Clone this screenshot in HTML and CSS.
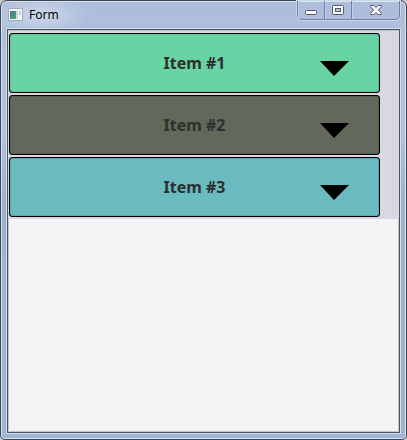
FILE: index.html
```html
<!DOCTYPE html>
<html lang="en">
<head>
  <meta charset="UTF-8">
  <meta name="viewport" content="width=device-width, initial-scale=1.0">
  <title>Form</title>
  <link rel="stylesheet" href="styles.css">
</head>
<body>

<div class="window">
  <header class="titlebar">
    <svg class="app-icon" width="16" height="14" viewBox="0 0 16 14" aria-hidden="true">
      <defs>
        <linearGradient id="iconFill" x1="0" y1="0" x2="1" y2="1">
          <stop offset="0" stop-color="#5273a4"/>
          <stop offset="1" stop-color="#46a86c"/>
        </linearGradient>
      </defs>
      <rect x=".5" y=".5" width="14" height="12" fill="#f4f5f5" stroke="#a5abb3"/>
      <rect x="2" y="3" width="6" height="8" fill="url(#iconFill)"/>
      <rect x="8" y="3" width="2" height="8" fill="#c9dcdd"/>
      <rect x="11" y="3" width="2" height="4" fill="#c5cfd8"/>
    </svg>
    <h1 class="title">Form</h1>
    <div class="controls">
      <button type="button" class="control" aria-label="Minimize">
        <svg width="14" height="12" viewBox="0 0 14 12">
          <rect x="1.5" y="6.5" width="11" height="4" rx="1" fill="#fff" stroke="#535666"/>
        </svg>
      </button>
      <button type="button" class="control" aria-label="Maximize">
        <svg width="14" height="12" viewBox="0 0 14 12">
          <rect x="1.5" y="1.5" width="11" height="9" rx="1" fill="#fff" stroke="#535666"/>
          <rect x="4.5" y="4.5" width="5" height="3" fill="#b4c4de" stroke="#535666"/>
        </svg>
      </button>
      <button type="button" class="control control-close" aria-label="Close">
        <svg width="14" height="12" viewBox="0 0 14 12">
          <path d="M1.500 1.500h3.500l2 2.200 2-2.200h3.500v1l-3 3.500 3 3.500v1h-3.500l-2-2.200-2 2.200h-3.500v-1l3-3.500-3-3.500z" fill="#fff" stroke="#535666"/>
        </svg>
      </button>
    </div>
  </header>

  <main class="client">
    <div class="list">
      <button type="button" class="item item-green">
        <span class="item-label">Item #1</span>
        <svg class="arrow" width="30" height="16" viewBox="0 0 30 16"><path d="M1 1h29L15 16z"/></svg>
      </button>
      <button type="button" class="item item-olive">
        <span class="item-label">Item #2</span>
        <svg class="arrow" width="30" height="16" viewBox="0 0 30 16"><path d="M1 1h29L15 16z"/></svg>
      </button>
      <button type="button" class="item item-teal">
        <span class="item-label">Item #3</span>
        <svg class="arrow" width="30" height="16" viewBox="0 0 30 16"><path d="M1 1h29L15 16z"/></svg>
      </button>
    </div>
  </main>
</div>

</body>
</html>
```
FILE: styles.css
```css
* {
  box-sizing: border-box;
}

body {
  margin: 0;
  background: #c8c8c8;
  font-family: "Noto Sans", sans-serif;
}

.window {
  display: flex;
  flex-direction: column;
  height: 100vh;
  padding: 0 5px 5px;
  border: 1px solid #3f4453;
  border-radius: 7px 7px 5px 5px;
  background: linear-gradient(#adbddb, #b2c2dd 30%, #9db1d0 45%, #9fb3d2);
  box-shadow: inset 0 0 0 1px #d9e5f3;
}

/* title bar */
.titlebar {
  display: flex;
  align-items: center;
  flex: none;
  height: 27px;
  margin: 0 -4px;
  padding: 0 5px 0 6px;
  background: radial-gradient(ellipse 50px 20px at 38px 14px, #ccd8e9, transparent);
}

.app-icon {
  flex: none;
}

.title {
  flex: 1;
  margin: 0 0 0 5px;
  color: #000;
  font-size: 12px;
  font-weight: 400;
  line-height: 16px;
}

.controls {
  display: flex;
  align-self: flex-start;
  height: 19px;
  border: 1px solid #71829c;
  border-top: 0;
  border-radius: 0 0 5px 5px;
  box-shadow: 0 0 0 1px #c9d8ea;
}

.control {
  display: flex;
  align-items: center;
  justify-content: center;
  width: 27px;
  padding: 0;
  border: 0;
  border-right: 1px solid #71829c;
  background: none;
  box-shadow: inset 1px 0 #c2d1e6;
}

.control-close {
  width: 47px;
  border-right: 0;
}

/* content */
.client {
  flex: 1;
  margin: 1px;
  border: 1px solid #4a5362;
  outline: 1px solid #cfdff0;
  background: #f4f4f4;
  box-shadow: inset 0 0 0 1px #c5c5c8;
}

.list {
  display: flex;
  flex-direction: column;
  gap: 2px;
  padding: 2px 19px 2px 1px;
  border-top: 1px solid #bfbfc4;
  background: #d9d7e1;
}

.item {
  display: grid;
  grid-template-columns: 60px 1fr 60px;
  align-items: center;
  height: 60px;
  padding: 0;
  border: 1px solid #000;
  border-radius: 3px;
  color: #2d302e;
  font-family: "Noto Sans", sans-serif;
  font-size: 16px;
  font-weight: 700;
  box-shadow: inset 0 0 1px #000;
}

.item-label {
  grid-column: 2;
}

.arrow {
  margin-top: 10px;
}

.item-green {
  background: #68d4a3;
}

.item-olive {
  background: #62685a;
}

.item-teal {
  background: #69bbc0;
}
```
